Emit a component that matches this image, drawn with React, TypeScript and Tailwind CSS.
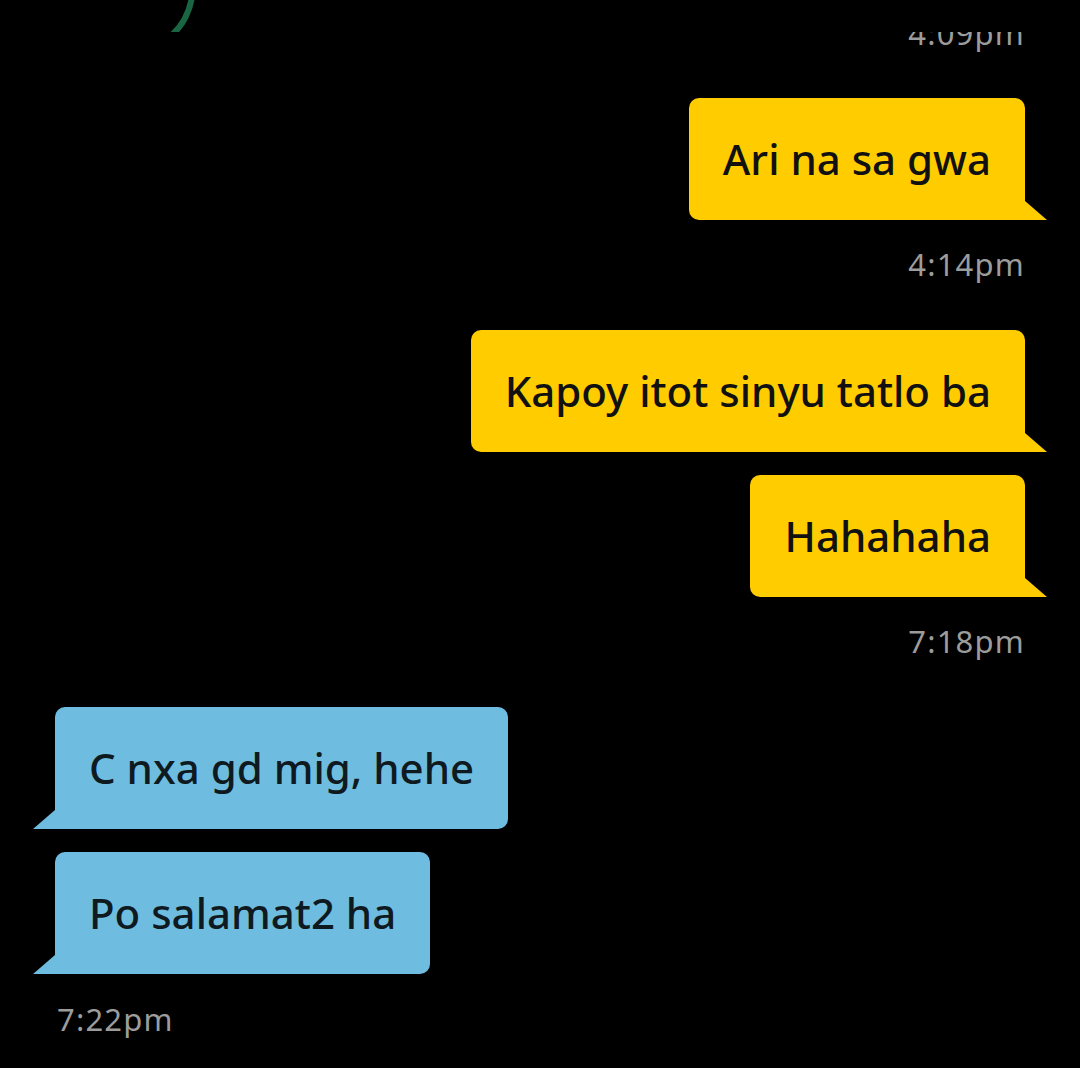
const font = { fontFamily: '"Noto Sans", "Open Sans", sans-serif' };

type Msg = { text: string; mine: boolean };

const Bubble = ({ text, mine }: Msg) => (
  <div className={mine ? 'flex justify-end pr-[55px]' : 'flex justify-start pl-[55px]'}>
    <div
      className={
        mine
          ? 'relative flex h-[122px] items-center rounded-[10px] rounded-br-none bg-[#ffcc00] px-[34px] text-[42px] font-medium text-[#111111]'
          : 'relative flex h-[122px] items-center rounded-[10px] rounded-bl-none bg-[#6ebde0] px-[34px] text-[42px] font-medium text-[#0f1a20]'
      }
    >
      <span className="whitespace-nowrap leading-none">{text}</span>
      {mine ? (
        <div className="absolute bottom-0 right-[-22px] h-[19px] w-[22px] bg-[#ffcc00] [clip-path:polygon(0_0,100%_100%,0_100%)]" />
      ) : (
        <div className="absolute bottom-0 left-[-22px] h-[19px] w-[22px] bg-[#6ebde0] [clip-path:polygon(100%_0,100%_100%,0_100%)]" />
      )}
    </div>
  </div>
);

const Stamp = ({ time, mine }: { time: string; mine: boolean }) => (
  <div
    className={
      mine
        ? 'pr-[55px] text-right text-[31px] leading-[30px] tracking-[1.2px] text-[#9c9c9c]'
        : 'pl-[57px] text-left text-[31px] leading-[30px] tracking-[1.2px] text-[#9c9c9c]'
    }
  >
    {time}
  </div>
);

export default function App() {
  return (
    <div className="min-h-[1068px] w-[1080px] overflow-hidden bg-black" style={font}>
      <div className="h-[32px] overflow-hidden pl-[165px]">
        <svg width="40" height="36" viewBox="0 0 40 36" className="block">
          <path d="M27 -3 Q23 20 8 34" stroke="#1b6642" strokeWidth="6" fill="none" strokeLinecap="round" />
        </svg>
      </div>
      <div className="h-[22px] overflow-hidden">
        <div className="-mt-[14px]">
          <Stamp time="4:09pm" mine />
        </div>
      </div>

      <div className="mt-[44px]">
        <Bubble text="Ari na sa gwa" mine />
      </div>
      <div className="mt-[29px]">
        <Stamp time="4:14pm" mine />
      </div>

      <div className="mt-[51px] flex flex-col gap-[23px]">
        <Bubble text="Kapoy itot sinyu tatlo ba" mine />
        <Bubble text="Hahahaha" mine />
      </div>
      <div className="mt-[29px]">
        <Stamp time="7:18pm" mine />
      </div>

      <div className="mt-[51px] flex flex-col gap-[23px]">
        <Bubble text="C nxa gd mig, hehe" mine={false} />
        <Bubble text="Po salamat2 ha" mine={false} />
      </div>
      <div className="mt-[30px]">
        <Stamp time="7:22pm" mine={false} />
      </div>
    </div>
  );
}
